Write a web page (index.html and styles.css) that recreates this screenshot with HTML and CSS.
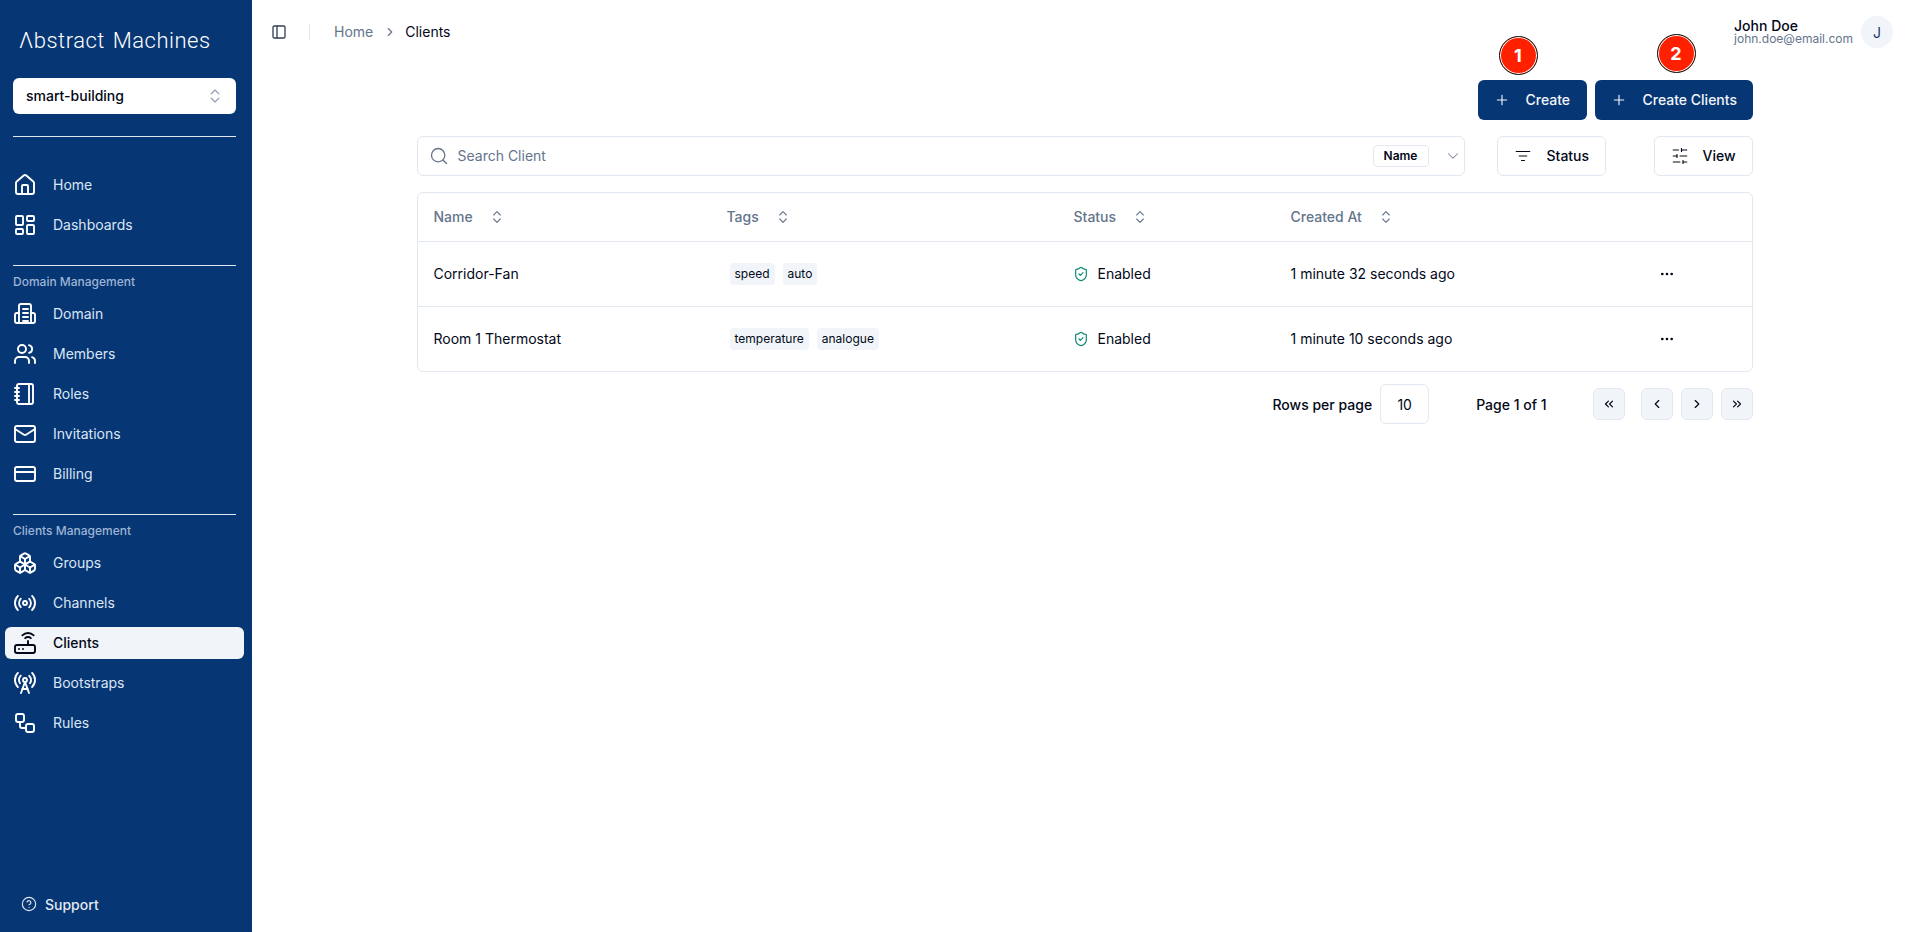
FILE: index.html
```html
<!DOCTYPE html>
<html lang="en">
<head>
  <meta charset="UTF-8" />
  <meta name="viewport" content="width=device-width, initial-scale=1.0" />
  <title>Clients</title>
  <link rel="stylesheet" href="styles.css">
</head>
<body>

  <aside class="sidebar">
    <div class="logo">Λbstract Machines</div>

    <div class="workspace">
      <span>smart-building</span>
      <svg class="icon-sm" viewBox="0 0 24 24"><path d="m7 15 5 5 5-5"/><path d="m7 9 5-5 5 5"/></svg>
    </div>

    <hr class="rule rule-top" />

    <nav class="nav">
      <a class="nav-item">
        <svg viewBox="0 0 24 24"><path d="M15 21v-8a1 1 0 0 0-1-1h-4a1 1 0 0 0-1 1v8"/><path d="M3 10a2 2 0 0 1 .709-1.528l7-5.999a2 2 0 0 1 2.582 0l7 5.999A2 2 0 0 1 21 10v9a2 2 0 0 1-2 2H5a2 2 0 0 1-2-2z"/></svg>
        Home
      </a>
      <a class="nav-item">
        <svg viewBox="0 0 24 24"><rect x="3" y="3" width="7" height="9" rx="1"/><rect x="14" y="3" width="7" height="5" rx="1"/><rect x="14" y="12" width="7" height="9" rx="1"/><rect x="3" y="16" width="7" height="5" rx="1"/></svg>
        Dashboards
      </a>
    </nav>

    <hr class="rule" />
    <div class="nav-label">Domain Management</div>
    <nav class="nav">
      <a class="nav-item">
        <svg viewBox="0 0 24 24"><path d="M6 21V4a2 2 0 0 1 2-2h8a2 2 0 0 1 2 2v17"/><path d="M6 11H4a2 2 0 0 0-2 2v6a2 2 0 0 0 2 2h16a2 2 0 0 0 2-2v-6a2 2 0 0 0-2-2h-2"/><path d="M10 7h5M10 11h5M10 15h5M10 19h5"/></svg>
        Domain
      </a>
      <a class="nav-item">
        <svg viewBox="0 0 24 24"><circle cx="9" cy="7" r="4"/><path d="M2 21v-2a4 4 0 0 1 4-4h6a4 4 0 0 1 4 4v2"/><path d="M16 3.100a4 4 0 0 1 0 7.800"/><path d="M22 21v-2a4 4 0 0 0-3-3.900"/></svg>
        Members
      </a>
      <a class="nav-item">
        <svg viewBox="0 0 24 24"><path d="M2 6h4M2 10h4M2 14h4M2 18h4"/><rect x="4" y="2" width="16" height="20" rx="2"/><path d="M16 2v20"/></svg>
        Roles
      </a>
      <a class="nav-item">
        <svg viewBox="0 0 24 24"><rect x="2" y="4" width="20" height="16" rx="2"/><path d="m22 7-8.970 5.700a1.940 1.940 0 0 1-2.060 0L2 7"/></svg>
        Invitations
      </a>
      <a class="nav-item">
        <svg viewBox="0 0 24 24"><rect x="2" y="5" width="20" height="14" rx="2"/><path d="M2 10h20"/></svg>
        Billing
      </a>
    </nav>

    <hr class="rule" />
    <div class="nav-label">Clients Management</div>
    <nav class="nav">
      <a class="nav-item">
        <svg viewBox="0 0 24 24"><path d="M2.970 12.920A2 2 0 0 0 2 14.630v3.240a2 2 0 0 0 .97 1.710l3 1.800a2 2 0 0 0 2.060 0L12 19v-5.500l-5-3-4.030 2.420Z"/><path d="m7 16.500-4.740-2.850"/><path d="m7 16.500 5-3"/><path d="M7 16.500v5.170"/><path d="M12 13.500V19l3.970 2.380a2 2 0 0 0 2.060 0l3-1.800a2 2 0 0 0 .97-1.710v-3.240a2 2 0 0 0-.97-1.710L17 10.500l-5 3Z"/><path d="m17 16.500-5-3"/><path d="m17 16.500 4.740-2.850"/><path d="M17 16.500v5.170"/><path d="M7.970 4.420A2 2 0 0 0 7 6.130v4.370l5 3 5-3V6.130a2 2 0 0 0-.97-1.710l-3-1.800a2 2 0 0 0-2.060 0l-3 1.800Z"/><path d="M12 8 7.260 5.150"/><path d="m12 8 4.740-2.850"/><path d="M12 13.500V8"/></svg>
        Groups
      </a>
      <a class="nav-item">
        <svg viewBox="0 0 24 24"><path d="M4.900 19.100C1 15.200 1 8.800 4.900 4.900"/><path d="M7.800 16.200c-2.300-2.300-2.300-6.100 0-8.500"/><circle cx="12" cy="12" r="2"/><path d="M16.200 7.800c2.300 2.300 2.300 6.100 0 8.500"/><path d="M19.100 4.900C23 8.800 23 15.100 19.100 19"/></svg>
        Channels
      </a>
      <a class="nav-item active">
        <svg viewBox="0 0 24 24"><rect x="2" y="14" width="20" height="8" rx="2"/><path d="M6.010 18H6M10.010 18H10M15 10v4"/><path d="M17.840 7.170a4 4 0 0 0-5.660 0"/><path d="M20.660 4.340a8 8 0 0 0-11.310 0"/></svg>
        Clients
      </a>
      <a class="nav-item">
        <svg viewBox="0 0 24 24"><path d="M4.900 16.100C1 12.200 1 5.800 4.900 1.900"/><path d="M7.800 4.700a6.140 6.140 0 0 0-.8 7.500"/><circle cx="12" cy="9" r="2"/><path d="M16.200 4.800c2 2 2.260 5.110.8 7.470"/><path d="M19.100 1.900a9.960 9.960 0 0 1 0 14.100"/><path d="M9.500 18h5"/><path d="m8 22 4-11 4 11"/></svg>
        Bootstraps
      </a>
      <a class="nav-item">
        <svg viewBox="0 0 24 24"><rect x="3" y="3" width="8" height="8" rx="2"/><path d="M7 11v4a2 2 0 0 0 2 2h4"/><rect x="13" y="13" width="8" height="8" rx="2"/></svg>
        Rules
      </a>
    </nav>

    <a class="support">
      <svg viewBox="0 0 24 24"><circle cx="12" cy="12" r="10"/><path d="M9.090 9a3 3 0 0 1 5.830 1c0 2-3 3-3 3"/><path d="M12 17h.01"/></svg>
      Support
    </a>
  </aside>

  <div class="page">
    <header class="topbar">
      <button class="panel-toggle">
        <svg viewBox="0 0 24 24"><rect x="3" y="3" width="18" height="18" rx="2"/><path d="M9 3v18"/></svg>
      </button>
      <span class="topbar-sep"></span>
      <span class="crumb">Home</span>
      <svg class="crumb-sep" viewBox="0 0 24 24"><path d="m9 18 6-6-6-6"/></svg>
      <span class="crumb crumb-current">Clients</span>

      <div class="user">
        <div class="user-text">
          <div class="user-name">John Doe</div>
          <div class="user-mail">john.doe@email.com</div>
        </div>
        <div class="avatar">J</div>
      </div>
    </header>

    <main class="content">
      <div class="actions">
        <button class="btn-primary btn-create">
          <svg viewBox="0 0 24 24"><path d="M5 12h14M12 5v14"/></svg>
          Create
          <span class="marker marker-one">1</span>
        </button>
        <button class="btn-primary btn-create-many">
          <svg viewBox="0 0 24 24"><path d="M5 12h14M12 5v14"/></svg>
          Create Clients
          <span class="marker marker-two">2</span>
        </button>
      </div>

      <div class="toolbar">
        <div class="search">
          <svg class="search-icon" viewBox="0 0 24 24"><circle cx="11" cy="11" r="8"/><path d="m21 21-4.300-4.300"/></svg>
          <span class="search-text">Search Client</span>
          <span class="search-chip">Name</span>
          <svg class="search-caret" viewBox="0 0 24 24"><path d="m6 9 6 6 6-6"/></svg>
        </div>
        <button class="btn-outline btn-status">
          <svg viewBox="0 0 24 24"><path d="M3 6h18M7 12h10M10 18h4"/></svg>
          Status
        </button>
        <button class="btn-outline btn-view">
          <svg viewBox="0 0 24 24"><path d="M21 4h-7M10 4H3M21 12h-9M8 12H3M21 20h-5M12 20H3M14 2v4M8 10v4M16 18v4"/></svg>
          View
        </button>
      </div>

      <div class="table-wrap">
        <table class="clients">
          <thead>
            <tr>
              <th class="col-name"><span class="th-in">Name <svg viewBox="0 0 24 24"><path d="m7 15 5 5 5-5"/><path d="m7 9 5-5 5 5"/></svg></span></th>
              <th class="col-tags"><span class="th-in">Tags <svg viewBox="0 0 24 24"><path d="m7 15 5 5 5-5"/><path d="m7 9 5-5 5 5"/></svg></span></th>
              <th class="col-status"><span class="th-in">Status <svg viewBox="0 0 24 24"><path d="m7 15 5 5 5-5"/><path d="m7 9 5-5 5 5"/></svg></span></th>
              <th class="col-created"><span class="th-in">Created At <svg viewBox="0 0 24 24"><path d="m7 15 5 5 5-5"/><path d="m7 9 5-5 5 5"/></svg></span></th>
              <th></th>
            </tr>
          </thead>
          <tbody>
            <tr>
              <td>Corridor-Fan</td>
              <td><div class="tags"><span class="tag">speed</span><span class="tag">auto</span></div></td>
              <td><span class="status"><svg viewBox="0 0 24 24"><path d="M20 13c0 5-3.500 7.500-7.660 8.950a1 1 0 0 1-.67-.01C7.500 20.500 4 18 4 13V6a1 1 0 0 1 1-1c2 0 4.500-1.200 6.240-2.720a1.170 1.170 0 0 1 1.520 0C14.510 3.810 17 5 19 5a1 1 0 0 1 1 1z"/><path d="m9 12 2 2 4-4"/></svg>Enabled</span></td>
              <td>1 minute 32 seconds ago</td>
              <td class="row-menu"><svg viewBox="0 0 24 24"><circle cx="5" cy="12" r="1"/><circle cx="12" cy="12" r="1"/><circle cx="19" cy="12" r="1"/></svg></td>
            </tr>
            <tr>
              <td>Room 1 Thermostat</td>
              <td><div class="tags"><span class="tag">temperature</span><span class="tag">analogue</span></div></td>
              <td><span class="status"><svg viewBox="0 0 24 24"><path d="M20 13c0 5-3.500 7.500-7.660 8.950a1 1 0 0 1-.67-.01C7.500 20.500 4 18 4 13V6a1 1 0 0 1 1-1c2 0 4.500-1.200 6.240-2.720a1.170 1.170 0 0 1 1.520 0C14.510 3.810 17 5 19 5a1 1 0 0 1 1 1z"/><path d="m9 12 2 2 4-4"/></svg>Enabled</span></td>
              <td>1 minute 10 seconds ago</td>
              <td class="row-menu"><svg viewBox="0 0 24 24"><circle cx="5" cy="12" r="1"/><circle cx="12" cy="12" r="1"/><circle cx="19" cy="12" r="1"/></svg></td>
            </tr>
          </tbody>
        </table>
      </div>

      <div class="pager">
        <span>Rows per page</span>
        <span class="pager-size">10</span>
        <span class="pager-info">Page 1 of 1</span>
        <button class="pager-btn pager-first"><svg viewBox="0 0 24 24"><path d="m11 17-5-5 5-5M18 17l-5-5 5-5"/></svg></button>
        <button class="pager-btn pager-prev"><svg viewBox="0 0 24 24"><path d="m15 18-6-6 6-6"/></svg></button>
        <button class="pager-btn"><svg viewBox="0 0 24 24"><path d="m9 18 6-6-6-6"/></svg></button>
        <button class="pager-btn"><svg viewBox="0 0 24 24"><path d="m6 17 5-5-5-5M13 17l5-5-5-5"/></svg></button>
      </div>
    </main>
  </div>

</body>
</html>
```

FILE: styles.css
```css
* {
  box-sizing: border-box;
}

html, body {
  height: 100%;
}

body {
  margin: 0;
  display: flex;
  font-family: Inter, "Liberation Sans", sans-serif;
  font-size: 14px;
  color: #020817;
  background-color: #fff;
  overflow: hidden;
}

svg {
  fill: none;
  stroke: currentColor;
  stroke-width: 2;
  stroke-linecap: round;
  stroke-linejoin: round;
  flex-shrink: 0;
}

button {
  font-family: inherit;
  cursor: pointer;
}

/* sidebar */
.sidebar {
  width: 252px;
  height: 100vh;
  flex-shrink: 0;
  display: flex;
  flex-direction: column;
  padding: 0 8px 0 5px;
  background-color: #073674;
  color: #e2e8f0;
}

.logo {
  margin: 27px 0 0 14px;
  font-family: Roboto, sans-serif;
  font-weight: 300;
  font-size: 22px;
  line-height: 28px;
  letter-spacing: 0.5px;
  word-spacing: 2px;
  color: #fff;
  white-space: nowrap;
}

.workspace {
  height: 36px;
  margin: 23px 8px 0;
  padding: 0 12px 1px 13px;
  display: flex;
  align-items: center;
  justify-content: space-between;
  background-color: #fff;
  border-radius: 6px;
  color: #020817;
  font-weight: 500;
}

.icon-sm {
  width: 18px;
  height: 18px;
  color: #94a0b0;
  stroke-width: 1.6;
}

.rule {
  height: 1px;
  margin: 0 8px;
  border: 0;
  background-color: #e2e8f0;
}

.rule-top {
  margin-top: 22px;
  margin-bottom: 32px;
}

.nav {
  display: flex;
  flex-direction: column;
  gap: 8px;
  margin-bottom: 24px;
}

.nav:last-of-type {
  margin-bottom: 0;
}

.nav-item {
  height: 32px;
  display: flex;
  align-items: center;
  gap: 16px;
  padding-left: 8px;
  border-radius: 6px;
  line-height: 20px;
  color: #dbe6f5;
}

.nav-item svg {
  width: 24px;
  height: 24px;
  color: #fff;
  stroke-width: 1.9;
}

.nav-item.active {
  background-color: #f1f5f9;
  color: #020817;
  font-weight: 500;
}

.nav-item.active svg {
  color: #020817;
}

.nav-label {
  height: 32px;
  margin: 0 8px;
  padding-bottom: 2px;
  display: flex;
  align-items: center;
  font-size: 12px;
  color: #9db4d4;
  font-weight: 500;
}

.support {
  margin-top: auto;
  margin-bottom: 18px;
  margin-left: 16px;
  height: 20px;
  display: flex;
  align-items: center;
  gap: 8px;
  font-weight: 500;
}

.support svg {
  width: 16px;
  height: 16px;
  stroke-width: 1.7;
}

/* top bar */
.page {
  flex: 1;
  min-width: 0;
}

.topbar {
  height: 60px;
  display: flex;
  align-items: flex-start;
  padding: 0 24px 0 13px;
  position: relative;
}

.panel-toggle {
  width: 28px;
  height: 28px;
  margin-top: 18px;
  padding: 0;
  display: flex;
  align-items: center;
  justify-content: center;
  background: none;
  border: 0;
  color: #334155;
}

.panel-toggle svg {
  width: 16px;
  height: 16px;
}

.topbar-sep {
  width: 1px;
  height: 16px;
  margin: 24px 24px 0 16px;
  background-color: #e2e8f0;
}

.crumb {
  margin-top: 22px;
  line-height: 20px;
  color: #64748b;
}

.crumb-current {
  color: #020817;
}

.crumb-sep {
  width: 14px;
  height: 14px;
  margin: 25px 8px 0 10px;
  color: #64748b;
}

.user {
  margin-left: auto;
  margin-top: 16px;
  display: flex;
  align-items: center;
  gap: 8px;
}

.user-name {
  font-weight: 500;
  line-height: 14px;
}

.user-mail {
  font-size: 12px;
  line-height: 12px;
  color: #64748b;
}

.avatar {
  width: 32px;
  height: 32px;
  display: flex;
  align-items: center;
  justify-content: center;
  border-radius: 50%;
  background-color: #f1f5f9;
  color: #1e3a6e;
}

/* content */
.content {
  width: 1336px;
  margin: 0 auto;
}

.actions {
  margin-top: 20px;
  display: flex;
  justify-content: flex-end;
  gap: 8px;
}

.btn-primary {
  position: relative;
  height: 40px;
  display: flex;
  align-items: center;
  padding: 0 16px 1px;
  background-color: #073674;
  border: 0;
  border-radius: 6px;
  color: #f1f5f9;
  font-size: 14px;
  font-weight: 500;
  white-space: nowrap;
}

.btn-primary svg {
  width: 16px;
  height: 16px;
  stroke-width: 1.7;
}

.btn-create {
  width: 109px;
  gap: 16px;
}

.btn-create-many {
  width: 158px;
  gap: 16px;
}

.marker {
  position: absolute;
  width: 39px;
  height: 39px;
  display: flex;
  align-items: center;
  justify-content: center;
  border: 1px solid #111;
  border-radius: 50%;
  background-color: #ff2000;
  box-shadow: inset 0 0 0 1px #fff;
  color: #fff;
  font-size: 18px;
  font-weight: 700;
}

.marker-one {
  top: -44px;
  left: 21px;
}

.marker-two {
  top: -46px;
  left: 62px;
}

.toolbar {
  margin-top: 16px;
  display: flex;
}

.search {
  width: 1048px;
  height: 40px;
  display: flex;
  align-items: center;
  padding: 0 0 1px 11px;
  border: 1px solid #e2e8f0;
  border-radius: 6px;
}

.search-icon {
  width: 20px;
  height: 20px;
  color: #64748b;
  stroke-width: 1.6;
}

.search-text {
  margin-left: 9px;
  color: #64748b;
}

.search-chip {
  width: 56px;
  height: 22px;
  margin-left: auto;
  display: flex;
  align-items: center;
  justify-content: center;
  border: 1px solid #e2e8f0;
  border-radius: 4px;
  font-size: 12px;
  font-weight: 600;
}

.search-caret {
  width: 18px;
  height: 18px;
  margin: 0 2px 0 15px;
  color: #7a8798;
  stroke-width: 1.4;
}

.btn-outline {
  height: 40px;
  display: flex;
  align-items: center;
  padding: 0 16px 1px;
  background-color: #fff;
  border: 1px solid #e2e8f0;
  border-radius: 6px;
  color: #020817;
  font-size: 14px;
  font-weight: 500;
}

.btn-outline svg {
  width: 18px;
  height: 18px;
  stroke-width: 1.6;
}

.btn-status {
  width: 109px;
  margin-left: 32px;
  gap: 15px;
}

.btn-view {
  width: 99px;
  margin-left: 48px;
  gap: 14px;
}

.table-wrap {
  margin-top: 16px;
  border: 1px solid #e2e8f0;
  border-radius: 6px;
  overflow: hidden;
}

.clients {
  width: 100%;
  border-collapse: collapse;
  table-layout: fixed;
}

.clients th {
  height: 48px;
  padding: 0 16px;
  text-align: left;
  font-weight: 500;
  color: #64748b;
  border-bottom: 1px solid #e2e8f0;
}

.col-name { width: 293px; }
.col-tags { width: 347px; }
.col-status { width: 217px; }
.col-created { width: 365px; }

.th-in {
  display: inline-flex;
  align-items: center;
  gap: 16px;
}

.th-in svg {
  width: 16px;
  height: 16px;
  stroke-width: 1.6;
}

.clients td {
  height: 65px;
  padding: 0 16px;
  border-bottom: 1px solid #e2e8f0;
}

.clients tbody tr:last-child td {
  border-bottom: 0;
}

.tags {
  display: flex;
  gap: 8px;
  padding-left: 3px;
}

.tag {
  height: 22px;
  display: flex;
  align-items: center;
  padding: 0 5px;
  background-color: #f1f5f9;
  border-radius: 4px;
  font-size: 12px;
}

.status {
  display: flex;
  align-items: center;
  gap: 9px;
  margin-left: -1px;
}

.status svg {
  width: 16px;
  height: 16px;
  color: #0f8a76;
  stroke-width: 1.8;
}

.row-menu svg {
  display: block;
  width: 16px;
  height: 16px;
  margin-left: 3px;
  fill: currentColor;
}

.pager {
  margin-top: 12px;
  display: flex;
  align-items: center;
  justify-content: flex-end;
  font-weight: 500;
}

.pager-size {
  width: 49px;
  height: 40px;
  margin-left: 8px;
  display: flex;
  align-items: center;
  justify-content: center;
  border: 1px solid #e2e8f0;
  border-radius: 6px;
  font-weight: 400;
}

.pager-info {
  margin-left: 47px;
  margin-right: 46px;
}

.pager-btn {
  width: 32px;
  height: 32px;
  margin-left: 8px;
  padding: 0;
  display: flex;
  align-items: center;
  justify-content: center;
  background-color: #f1f5f9;
  border: 1px solid #e2e8f0;
  border-radius: 6px;
  color: #020817;
}

.pager-btn svg {
  width: 14px;
  height: 14px;
}

.pager-first {
  margin-left: 0;
}

.pager-prev {
  margin-left: 16px;
}
```
